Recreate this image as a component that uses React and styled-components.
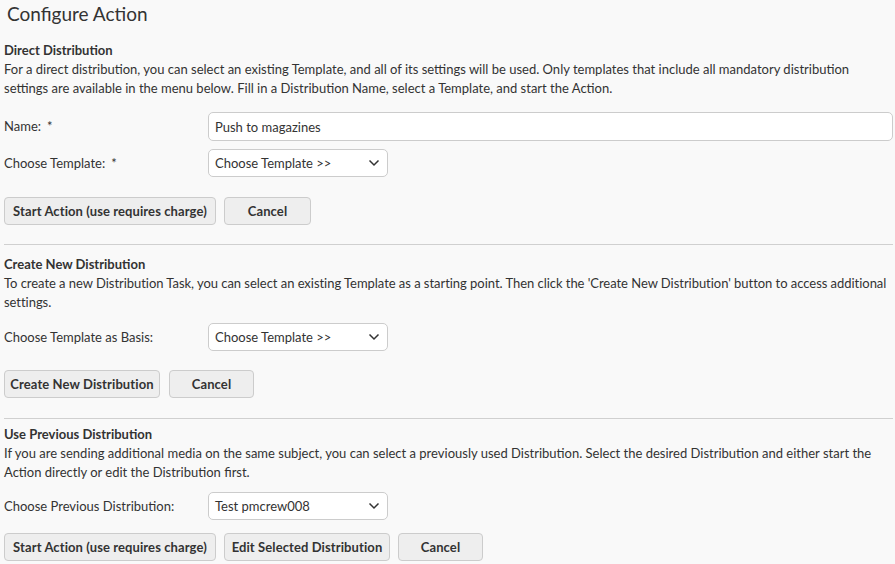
import React from "react";
import styled, { createGlobalStyle } from "styled-components";

const Global = createGlobalStyle`
  html, body { margin: 0; padding: 0; background: #f9f9f9; }
  body { font-family: Lato, "Open Sans", sans-serif; color: #333; font-size: 13px; }
`;

const Page = styled.div`
  padding: 0 2px 0 4px;
`;

const Title = styled.h1`
  margin: 0;
  padding: 2px 0 0 3px;
  font-size: 19px;
  font-weight: 400;
  line-height: 24px;
  color: #333;
`;

const Section = styled.section`
  padding-top: ${(p) => p.$top}px;
  padding-bottom: ${(p) => p.$bottom}px;
  border-bottom: ${(p) => (p.$divider ? "1px solid #d0d0d0" : "none")};
`;

const Heading = styled.h2`
  margin: 0;
  font-size: 13px;
  font-weight: 700;
  line-height: 19px;
`;

const Desc = styled.p`
  margin: 0 0 ${(p) => p.$gap}px;
  font-size: 13px;
  line-height: 19px;
  letter-spacing: ${(p) => (p.$tight ? "-0.04px" : "normal")};
`;

const Row = styled.div`
  display: flex;
  align-items: center;
  height: ${(p) => p.$h || 28}px;
  margin-bottom: ${(p) => p.$gap}px;
`;

const Label = styled.label`
  width: 204px;
  flex: none;
  font-size: 13px;
  line-height: 19px;
`;

const Star = styled.span`
  margin-left: 6px;
`;

const TextInput = styled.input`
  flex: 1;
  height: 29px;
  box-sizing: border-box;
  border: 1px solid #ccc;
  border-radius: 5px;
  background: #fff;
  padding: 0 6px;
  font: inherit;
  font-size: 13px;
  color: #333;
  outline: none;
`;

const SelectBox = styled.div`
  width: 180px;
  height: 28px;
  box-sizing: border-box;
  border: 1px solid #ccc;
  border-radius: 5px;
  background: #fff;
  display: flex;
  align-items: center;
  justify-content: space-between;
  padding: 0 7px 0 6px;
  font-size: 13px;
`;

const Buttons = styled.div`
  display: flex;
  gap: ${(p) => p.$gap || 8}px;
`;

const Button = styled.button`
  height: 28px;
  width: ${(p) => p.$w}px;
  box-sizing: border-box;
  padding: 0;
  text-align: center;
  border: 1px solid #ccc;
  border-radius: 4px;
  background: #eeeeee;
  font-family: inherit;
  font-size: 13px;
  font-weight: 700;
  letter-spacing: 0.1px;
  color: #333;
`;

const Chevron = () => (
  <svg width="12" height="8" viewBox="0 0 12 8">
    <path d="M1.5 1.5 L6 6 L10.5 1.5" fill="none" stroke="#333" strokeWidth="1.5" />
  </svg>
);

const Select = ({ value }) => (
  <SelectBox>
    <span>{value}</span>
    <Chevron />
  </SelectBox>
);

export default function App() {
  return (
    <>
      <Global />
      <Page>
        <Title>Configure Action</Title>
        <Section $top={15} $bottom={19} $divider>
          <Heading>Direct Distribution</Heading>
          <Desc $gap={14}>
            For a direct distribution, you can select an existing Template, and all of its settings will be used. Only templates that include all mandatory distribution settings are available in the menu below. Fill in a Distribution Name, select a Template, and start the Action.
          </Desc>
          <Row $h={29} $gap={8}>
            <Label>Name:<Star>*</Star></Label>
            <TextInput defaultValue="Push to magazines" />
          </Row>
          <Row $gap={20}>
            <Label>Choose Template:<Star>*</Star></Label>
            <Select value="Choose Template >>" />
          </Row>
          <Buttons>
            <Button $w={212}>Start Action (use requires charge)</Button>
            <Button $w={87}>Cancel</Button>
          </Buttons>
        </Section>
        <Section $top={10} $bottom={20} $divider>
          <Heading>Create New Distribution</Heading>
          <Desc $gap={11} $tight>
            To create a new Distribution Task, you can select an existing Template as a starting point. Then click the 'Create New Distribution' button to access additional settings.
          </Desc>
          <Row $gap={19}>
            <Label>Choose Template as Basis:</Label>
            <Select value="Choose Template >>" />
          </Row>
          <Buttons $gap={9}>
            <Button $w={156}>Create New Distribution</Button>
            <Button $w={85}>Cancel</Button>
          </Buttons>
        </Section>
        <Section $top={6} $bottom={0}>
          <Heading>Use Previous Distribution</Heading>
          <Desc $gap={10}>
            If you are sending additional media on the same subject, you can select a previously used Distribution. Select the desired Distribution and either start the Action directly or edit the Distribution first.
          </Desc>
          <Row $gap={13}>
            <Label>Choose Previous Distribution:</Label>
            <Select value="Test pmcrew008" />
          </Row>
          <Buttons>
            <Button $w={212}>Start Action (use requires charge)</Button>
            <Button $w={166}>Edit Selected Distribution</Button>
            <Button $w={85}>Cancel</Button>
          </Buttons>
        </Section>
      </Page>
    </>
  );
}
